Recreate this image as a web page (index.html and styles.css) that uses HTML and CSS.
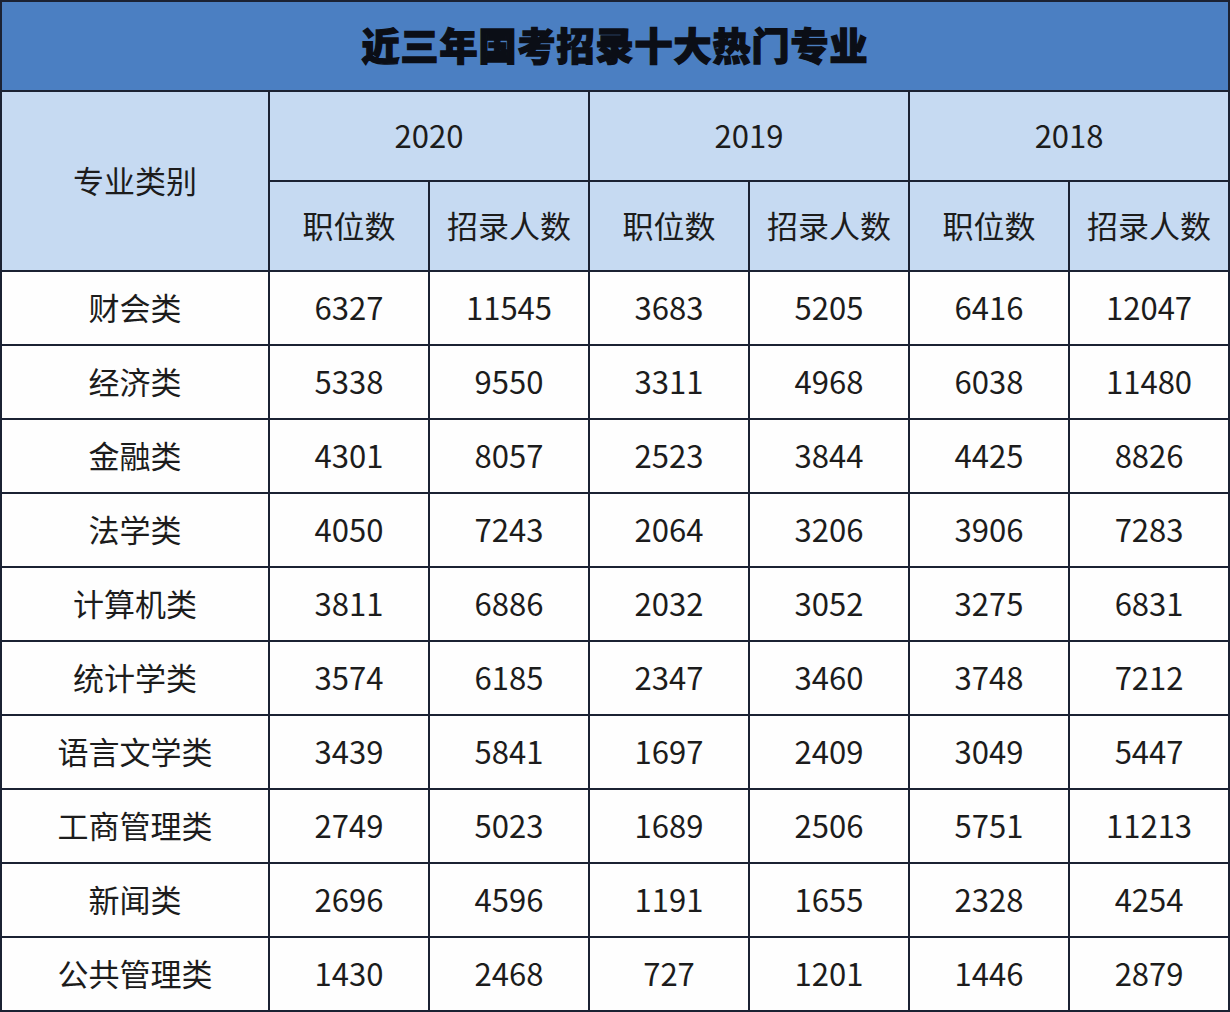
FILE: index.html
```html
<!DOCTYPE html>
<html lang="zh-CN">
<head>
<meta charset="utf-8">
<title>近三年国考招录十大热门专业</title>
<link rel="stylesheet" href="styles.css">
</head>
<body>
<table class="sheet">
  <colgroup>
    <col class="c-first">
    <col class="c-num"><col class="c-num"><col class="c-num">
    <col class="c-num"><col class="c-num"><col class="c-num">
  </colgroup>
  <thead>
    <tr class="r-title"><th colspan="7" class="title">近三年国考招录十大热门专业</th></tr>
    <tr class="r-head">
      <th rowspan="2" class="hd">专业类别</th>
      <th colspan="2" class="hd">2020</th>
      <th colspan="2" class="hd">2019</th>
      <th colspan="2" class="hd">2018</th>
    </tr>
    <tr class="r-head">
      <th class="hd">职位数</th><th class="hd">招录人数</th>
      <th class="hd">职位数</th><th class="hd">招录人数</th>
      <th class="hd">职位数</th><th class="hd">招录人数</th>
    </tr>
  </thead>
  <tbody>
    <tr><td>财会类</td><td>6327</td><td>11545</td><td>3683</td><td>5205</td><td>6416</td><td>12047</td></tr>
    <tr><td>经济类</td><td>5338</td><td>9550</td><td>3311</td><td>4968</td><td>6038</td><td>11480</td></tr>
    <tr><td>金融类</td><td>4301</td><td>8057</td><td>2523</td><td>3844</td><td>4425</td><td>8826</td></tr>
    <tr><td>法学类</td><td>4050</td><td>7243</td><td>2064</td><td>3206</td><td>3906</td><td>7283</td></tr>
    <tr><td>计算机类</td><td>3811</td><td>6886</td><td>2032</td><td>3052</td><td>3275</td><td>6831</td></tr>
    <tr><td>统计学类</td><td>3574</td><td>6185</td><td>2347</td><td>3460</td><td>3748</td><td>7212</td></tr>
    <tr><td>语言文学类</td><td>3439</td><td>5841</td><td>1697</td><td>2409</td><td>3049</td><td>5447</td></tr>
    <tr><td>工商管理类</td><td>2749</td><td>5023</td><td>1689</td><td>2506</td><td>5751</td><td>11213</td></tr>
    <tr><td>新闻类</td><td>2696</td><td>4596</td><td>1191</td><td>1655</td><td>2328</td><td>4254</td></tr>
    <tr><td>公共管理类</td><td>1430</td><td>2468</td><td>727</td><td>1201</td><td>1446</td><td>2879</td></tr>
  </tbody>
</table>
</body>
</html>
```

FILE: styles.css
```css
html, body {
  margin: 0;
  padding: 0;
  background: #ffffff;
}

.sheet {
  width: 1230px;
  border-collapse: collapse;
  table-layout: fixed;
  font-family: "Noto Sans CJK SC", "Noto Sans", sans-serif;
  color: #1c1c1c;
  border: 2px solid #1b2233;
}

.c-first { width: 268px; }
.c-num { width: 160px; }

.sheet th,
.sheet td {
  border: 2px solid #1b2233;
  padding: 0 0 4px 0;
  text-align: center;
  vertical-align: middle;
  font-size: 31px;
  font-weight: 400;
  line-height: 1;
}

.r-title { height: 90px; }
.sheet .title {
  background: #4b7fc2;
  font-size: 38px;
  font-weight: 900;
  color: #0b0e16;
  letter-spacing: 1px;
  -webkit-text-stroke: 1.4px #0b0e16;
  padding-bottom: 4px;
}

.r-head { height: 90px; }
.hd {
  background: #c6daf2;
}

.sheet tbody tr { height: 74px; }
.sheet tbody td {
  background: #fefefe;
}
```
